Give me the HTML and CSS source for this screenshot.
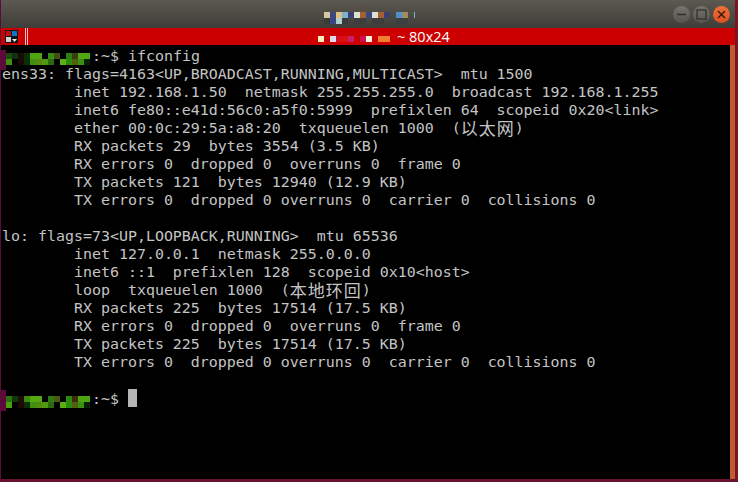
FILE: index.html
```html
<!DOCTYPE html>
<html lang="en">
<head>
<meta charset="utf-8">
<title>Terminal</title>
<link rel="stylesheet" href="styles.css">
</head>
<body>
<div class="window">
  <header class="titlebar">
    <svg class="title-mosaic" width="96" height="18" viewBox="0 0 96 18" aria-hidden="true">
      <rect x="36" y="0" width="6" height="6" fill="#5c4b40"/>
      <rect x="0" y="6" width="6" height="6" fill="#d8c8a0"/><rect x="6" y="6" width="6" height="6" fill="#3a4880"/><rect x="12" y="6" width="6" height="6" fill="#e0c080"/><rect x="18" y="6" width="6" height="6" fill="#80b0d0"/><rect x="24" y="6" width="6" height="6" fill="#3a4070"/><rect x="30" y="6" width="6" height="6" fill="#e0e0d0"/><rect x="36" y="6" width="6" height="6" fill="#a06030"/><rect x="42" y="6" width="6" height="6" fill="#3a4880"/><rect x="48" y="6" width="6" height="6" fill="#e0e0d0"/><rect x="54" y="6" width="6" height="6" fill="#a06030"/><rect x="60" y="6" width="6" height="6" fill="#3a4070"/><rect x="72" y="6" width="6" height="6" fill="#5090c8"/><rect x="78" y="6" width="6" height="6" fill="#a08a60"/><rect x="90" y="6" width="1" height="6" fill="#80b0d0"/>
      <rect x="0" y="12" width="6" height="6" fill="#3a3a38"/><rect x="6" y="12" width="6" height="6" fill="#3a4880"/><rect x="12" y="12" width="6" height="6" fill="#b0d0d0"/><rect x="18" y="12" width="6" height="6" fill="#3a3a38"/><rect x="30" y="12" width="12" height="6" fill="#3c3e3c"/><rect x="48" y="12" width="12" height="6" fill="#3c3e3c"/><rect x="72" y="12" width="12" height="6" fill="#3c3e40"/>
    </svg>
    <div class="controls">
      <span class="ctl"><svg width="11" height="11" viewBox="0 0 11 11" aria-hidden="true"><path d="M1 5.500H10" stroke="#2e2d2a" stroke-width="1.500"/></svg></span>
      <span class="ctl"><svg width="11" height="11" viewBox="0 0 11 11" aria-hidden="true"><rect x="1" y="1" width="9" height="9" fill="none" stroke="#2e2d2a" stroke-width="1.200"/></svg></span>
      <span class="ctl ctl-close"><svg width="11" height="11" viewBox="0 0 11 11" aria-hidden="true"><path d="M2 2L9 9M9 2L2 9" stroke="#3a1a0c" stroke-width="1.500"/></svg></span>
    </div>
  </header>
  <div class="tabbar">
    <svg class="tab-icon" width="14" height="15" viewBox="0 0 14 15" aria-hidden="true">
      <rect width="13" height="13" fill="#111"/><rect x="1" y="1" width="5" height="5" fill="#c80a10"/><rect x="7" y="1" width="5" height="5" fill="#0a78c8"/><rect x="1" y="7" width="5" height="5" fill="#d0d0d0"/><path d="M7 9H12L9.500 12Z" fill="#eee"/>
    </svg>
    <span class="tab-stripes"></span>
    <svg class="tab-mosaic" width="72" height="6" viewBox="0 0 72 6" aria-hidden="true">
      <rect x="0" width="6" height="6" fill="#f8ecc0"/><rect x="12" width="6" height="6" fill="#e0d8f0"/><rect x="18" width="6" height="6" fill="#d01020"/><rect x="24" width="6" height="6" fill="#e01010"/><rect x="30" width="6" height="6" fill="#c82070"/><rect x="42" width="6" height="6" fill="#d01050"/><rect x="48" width="6" height="6" fill="#f8f4e0"/><rect x="60" width="12" height="6" fill="#f08030"/>
    </svg>
    <span class="tab-title">~ 80x24</span>
    <span class="tab-smear"></span>
  </div>
  <div class="term">
    <span class="blob blob-top"></span>
    <span class="blob blob-bottom"></span>
    <pre class="screen"><svg class="user" width="90" height="12" viewBox="-4 0 90 12" aria-hidden="true"><rect x="0" y="0" width="6" height="6" fill="#174a0c"/><rect x="6" y="0" width="6" height="6" fill="#103010"/><rect x="12" y="0" width="6" height="6" fill="#1c0a04"/><rect x="18" y="0" width="6" height="6" fill="#0a3008"/><rect x="24" y="0" width="12" height="6" fill="#50a510"/><rect x="42" y="0" width="6" height="6" fill="#3a8a10"/><rect x="48" y="0" width="6" height="6" fill="#405010"/><rect x="60" y="0" width="6" height="6" fill="#2a8010"/><rect x="66" y="0" width="6" height="6" fill="#403a10"/><rect x="72" y="0" width="12" height="6" fill="#50a810"/><rect x="0" y="6" width="6" height="6" fill="#3f9010"/><rect x="12" y="6" width="6" height="6" fill="#1c0804"/><rect x="18" y="6" width="6" height="6" fill="#0a3008"/><rect x="24" y="6" width="6" height="6" fill="#3f9010"/><rect x="30" y="6" width="6" height="6" fill="#568a10"/><rect x="36" y="6" width="6" height="6" fill="#4f9a10"/><rect x="42" y="6" width="6" height="6" fill="#2c6a10"/><rect x="54" y="6" width="6" height="6" fill="#5ab010"/><rect x="60" y="6" width="6" height="6" fill="#2a8a10"/><rect x="66" y="6" width="6" height="6" fill="#506010"/><rect x="72" y="6" width="6" height="6" fill="#3a9010"/><rect x="78" y="6" width="6" height="6" fill="#082008"/></svg>:~$ ifconfig
ens33: flags=4163&lt;UP,BROADCAST,RUNNING,MULTICAST&gt;  mtu 1500
        inet 192.168.1.50  netmask 255.255.255.0  broadcast 192.168.1.255
        inet6 fe80::e41d:56c0:a5f0:5999  prefixlen 64  scopeid 0x20&lt;link&gt;
        ether 00:0c:29:5a:a8:20  txqueuelen 1000  (<span class="cjk">以太网</span>)
        RX packets 29  bytes 3554 (3.5 KB)
        RX errors 0  dropped 0  overruns 0  frame 0
        TX packets 121  bytes 12940 (12.9 KB)
        TX errors 0  dropped 0 overruns 0  carrier 0  collisions 0

lo: flags=73&lt;UP,LOOPBACK,RUNNING&gt;  mtu 65536
        inet 127.0.0.1  netmask 255.0.0.0
        inet6 ::1  prefixlen 128  scopeid 0x10&lt;host&gt;
        loop  txqueuelen 1000  (<span class="cjk">本地环回</span>)
        RX packets 225  bytes 17514 (17.5 KB)
        RX errors 0  dropped 0  overruns 0  frame 0
        TX packets 225  bytes 17514 (17.5 KB)
        TX errors 0  dropped 0 overruns 0  carrier 0  collisions 0

<svg class="user" width="90" height="12" viewBox="-4 0 90 12" aria-hidden="true"><rect x="0" y="0" width="6" height="6" fill="#2c7010"/><rect x="6" y="0" width="6" height="6" fill="#0e3a0a"/><rect x="12" y="0" width="6" height="6" fill="#200a04"/><rect x="18" y="0" width="6" height="6" fill="#3a8a10"/><rect x="24" y="0" width="12" height="6" fill="#55a810"/><rect x="42" y="0" width="6" height="6" fill="#2e7a10"/><rect x="48" y="0" width="6" height="6" fill="#485a10"/><rect x="60" y="0" width="6" height="6" fill="#2a8a10"/><rect x="66" y="0" width="6" height="6" fill="#402a08"/><rect x="72" y="0" width="12" height="6" fill="#4fa510"/><rect x="0" y="6" width="6" height="6" fill="#4aa010"/><rect x="12" y="6" width="6" height="6" fill="#200804"/><rect x="18" y="6" width="6" height="6" fill="#0a3008"/><rect x="24" y="6" width="6" height="6" fill="#3f9010"/><rect x="30" y="6" width="6" height="6" fill="#568a10"/><rect x="36" y="6" width="6" height="6" fill="#4f9a10"/><rect x="42" y="6" width="6" height="6" fill="#2c6a10"/><rect x="54" y="6" width="6" height="6" fill="#5ab010"/><rect x="60" y="6" width="6" height="6" fill="#2a8a10"/><rect x="66" y="6" width="6" height="6" fill="#506010"/><rect x="72" y="6" width="6" height="6" fill="#3a9010"/><rect x="78" y="6" width="6" height="6" fill="#082008"/></svg>:~$ <span class="cursor"></span></pre>
    <div class="edge"></div>
  </div>
</div>
</body>
</html>
```
FILE: styles.css
```css
html, body {
  margin: 0;
  height: 100%;
  background: #000;
  overflow: hidden;
}
.window {
  box-sizing: border-box;
  width: 738px;
  height: 482px;
  display: flex;
  flex-direction: column;
  border-left: 1px solid #5e0b3c;
  border-right: 3px solid #7a1526;
  border-bottom: 3px solid #6a1030;
}
.titlebar {
  position: relative;
  flex: 0 0 28px;
  display: flex;
  align-items: center;
  justify-content: flex-end;
  background: linear-gradient(#5b5950, #3e3d38);
}
.title-mosaic {
  position: absolute;
  left: 323px;
  top: 6px;
}
.controls {
  display: flex;
  gap: 3px;
  margin-right: 5px;
}
.ctl {
  width: 17px;
  height: 17px;
  border-radius: 50%;
  display: flex;
  align-items: center;
  justify-content: center;
  background: linear-gradient(#74736c, #55544e);
}
.ctl-close {
  background: linear-gradient(#f0703a, #dd4f1c);
}
.tabbar {
  position: relative;
  flex: 0 0 17px;
  display: flex;
  align-items: center;
  background: #cc0000;
}
.tab-icon {
  margin-left: 4px;
  margin-top: 1px;
}
.tab-stripes {
  width: 3px;
  height: 17px;
  margin-left: 6px;
  border-left: 1px solid #f4c0c0;
  border-right: 1px solid #f4c0c0;
  box-sizing: border-box;
}
.tab-mosaic {
  position: absolute;
  left: 317px;
  top: 8px;
}
.tab-title {
  position: absolute;
  left: 396px;
  top: 0;
  color: #fff;
  font: 14.5px/17px "Open Sans", "Liberation Sans", sans-serif;
}
.tab-smear {
  position: absolute;
  left: 335px;
  top: 17px;
  width: 48px;
  height: 2px;
  background: #cc0000;
  border-radius: 0 0 12px 12px;
}
.term {
  position: relative;
  flex: 1;
  display: flex;
  background: #000;
}
.screen {
  flex: 1;
  margin: 0;
  padding: 2px 0 0 1px;
  color: #c4c4c4;
  font: 14.95px/18px "DejaVu Sans Mono", "Noto Sans CJK SC", monospace;
}
.user {
  vertical-align: -4px;
}
.cjk {
  font-family: "Noto Sans CJK SC", sans-serif;
  font-size: 17px;
  line-height: 1;
  letter-spacing: 1px;
  vertical-align: top;
}
.cursor {
  display: inline-block;
  width: 9px;
  height: 18px;
  background: #b4b4b4;
  vertical-align: -3px;
}
.edge {
  flex: 0 0 5px;
  background: #c05a30;
}
.blob {
  position: absolute;
  left: 0;
  width: 5px;
  background: #5e0b3c;
}
.blob-top {
  top: 5px;
  height: 20px;
}
.blob-bottom {
  top: 345px;
  height: 21px;
}
```
